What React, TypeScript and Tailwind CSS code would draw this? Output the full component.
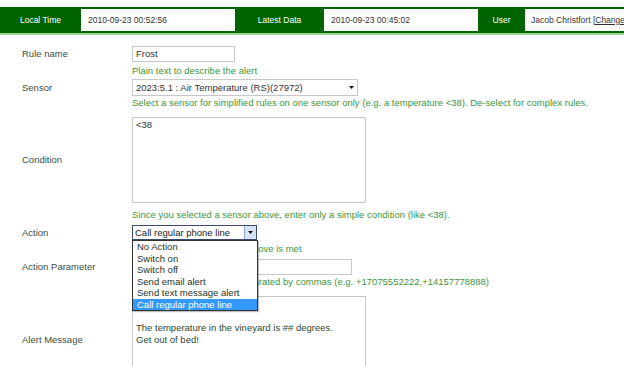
import React from "react";

function Label({ children }: { children: React.ReactNode }) {
  return (
    <div className="w-[132px] shrink-0 pl-[22px] flex items-center text-[#3d4d3d]">
      {children}
    </div>
  );
}

export default function App() {
  const options = [
    "No Action",
    "Switch on",
    "Switch off",
    "Send email alert",
    "Send text message alert",
    "Call regular phone line",
  ];
  return (
    <div className="w-[624px] h-[366px] overflow-hidden bg-white font-['Liberation_Sans',Arial,sans-serif]">
      {/* Top status bar */}
      <div className="pt-[7px]">
        <div className="flex h-[26px] bg-[#006400] py-[2px] overflow-hidden whitespace-nowrap text-[8.5px]">
          <div className="w-[81px] shrink-0 flex items-center justify-center text-white">Local Time</div>
          <div className="w-[154px] shrink-0 bg-white flex items-center pl-[7px] text-[#333]">2010-09-23 00:52:56</div>
          <div className="w-[89px] shrink-0 flex items-center justify-center text-white">Latest Data</div>
          <div className="w-[154px] shrink-0 bg-white flex items-center pl-[7px] text-[#333]">2010-09-23 00:45:02</div>
          <div className="w-[47px] shrink-0 flex items-center justify-center text-white">User</div>
          <div className="w-[160px] shrink-0 bg-white flex items-center pl-[6px] text-[#333]">
            Jacob Christfort&nbsp;<span className="underline">[Change]</span>
          </div>
        </div>
        <div className="h-[2px] bg-[#9ad89a]" />
      </div>

      {/* Form */}
      <div className="pt-[11px] text-[9.5px] leading-[12px] whitespace-nowrap">
        {/* Rule name */}
        <div className="flex h-[16px]">
          <Label>Rule name</Label>
          <div className="w-[103px] h-[16px] border border-[#c8c8c8] flex items-center pl-[3px] text-[#333]">Frost</div>
        </div>
        <div className="flex h-[17px] items-center pl-[132px] text-[#3c963c]">Plain text to describe the alert</div>

        {/* Sensor */}
        <div className="flex h-[17px]">
          <Label>Sensor</Label>
          <div className="w-[226px] h-[17px] border border-[#c8c8c8] flex items-center pl-[3px] text-[#333]">
            <span className="flex-1">2023:5.1 : Air Temperature (RS)(27972)</span>
            <svg width="5" height="3" viewBox="0 0 5 3" className="mr-[3px]">
              <path d="M0 0 L5 0 L2.5 3 Z" fill="#111" />
            </svg>
          </div>
        </div>
        <div className="h-[21px] pt-[1px] pl-[132px] text-[#3c963c]">
          Select a sensor for simplified rules on one sensor only (e.g. a temperature &lt;38). De-select for complex rules.
        </div>

        {/* Condition */}
        <div className="flex h-[86px]">
          <Label>Condition</Label>
          <div className="w-[234px] h-[86px] border border-[#c8c8c8] pt-[1px] pl-[3px] text-[#333]">&lt;38</div>
        </div>
        <div className="h-[22px] pt-[6px] pl-[132px] text-[#3c963c]">
          Since you selected a sensor above, enter only a simple condition (like &lt;38).
        </div>

        {/* Action */}
        <div className="flex h-[15px]">
          <Label>Action</Label>
          <div className="relative z-10">
            <div className="w-[125px] h-[15px] border border-[#3b4b6b] flex bg-white">
              <div className="flex-1 flex items-center pl-[2px] text-[#222]">Call regular phone line</div>
              <div className="w-[12px] h-full border-l border-[#8ea6d4] bg-[#d6e2f8] flex items-center justify-center">
                <svg width="5" height="3" viewBox="0 0 5 3">
                  <path d="M0 0 L5 0 L2.5 3 Z" fill="#111" />
                </svg>
              </div>
            </div>
            <div className="absolute left-0 top-[15px] w-[126px] border border-[#333] bg-white shadow-[1px_1px_1px_rgba(0,0,0,0.25)]">
              {options.map((o, i) => (
                <div
                  key={o}
                  className={
                    i === options.length - 1
                      ? "h-[11.5px] leading-[11.5px] pl-[4px] bg-[#3399ff] text-white"
                      : "h-[11.5px] leading-[11.5px] pl-[4px] text-[#1f331f]"
                  }
                >
                  {o}
                </div>
              ))}
            </div>
          </div>
        </div>
        <div className="h-[19px] pt-[3px] pl-[132px] text-[#3c963c]">
          Actions when the condition above is met
        </div>

        {/* Action Parameter */}
        <div className="flex h-[16px]">
          <Label>Action Parameter</Label>
          <div className="w-[220px] h-[16px] border border-[#c8c8c8]" />
        </div>
        <div className="h-[21px] pt-[1px] pl-[132px] text-[#3c963c]">
          Phone number(s) to call, separated by commas (e.g. +17075552222,+14157778888)
        </div>

        {/* Alert Message */}
        <div className="flex h-[88px]">
          <Label>Alert Message</Label>
          <div className="w-[234px] h-[88px] border border-[#c8c8c8] pt-[1px] pl-[3px] text-[#2d482d] whitespace-pre">
            {"\n\nThe temperature in the vineyard is ## degrees.\nGet out of bed!"}
          </div>
        </div>
      </div>
    </div>
  );
}
